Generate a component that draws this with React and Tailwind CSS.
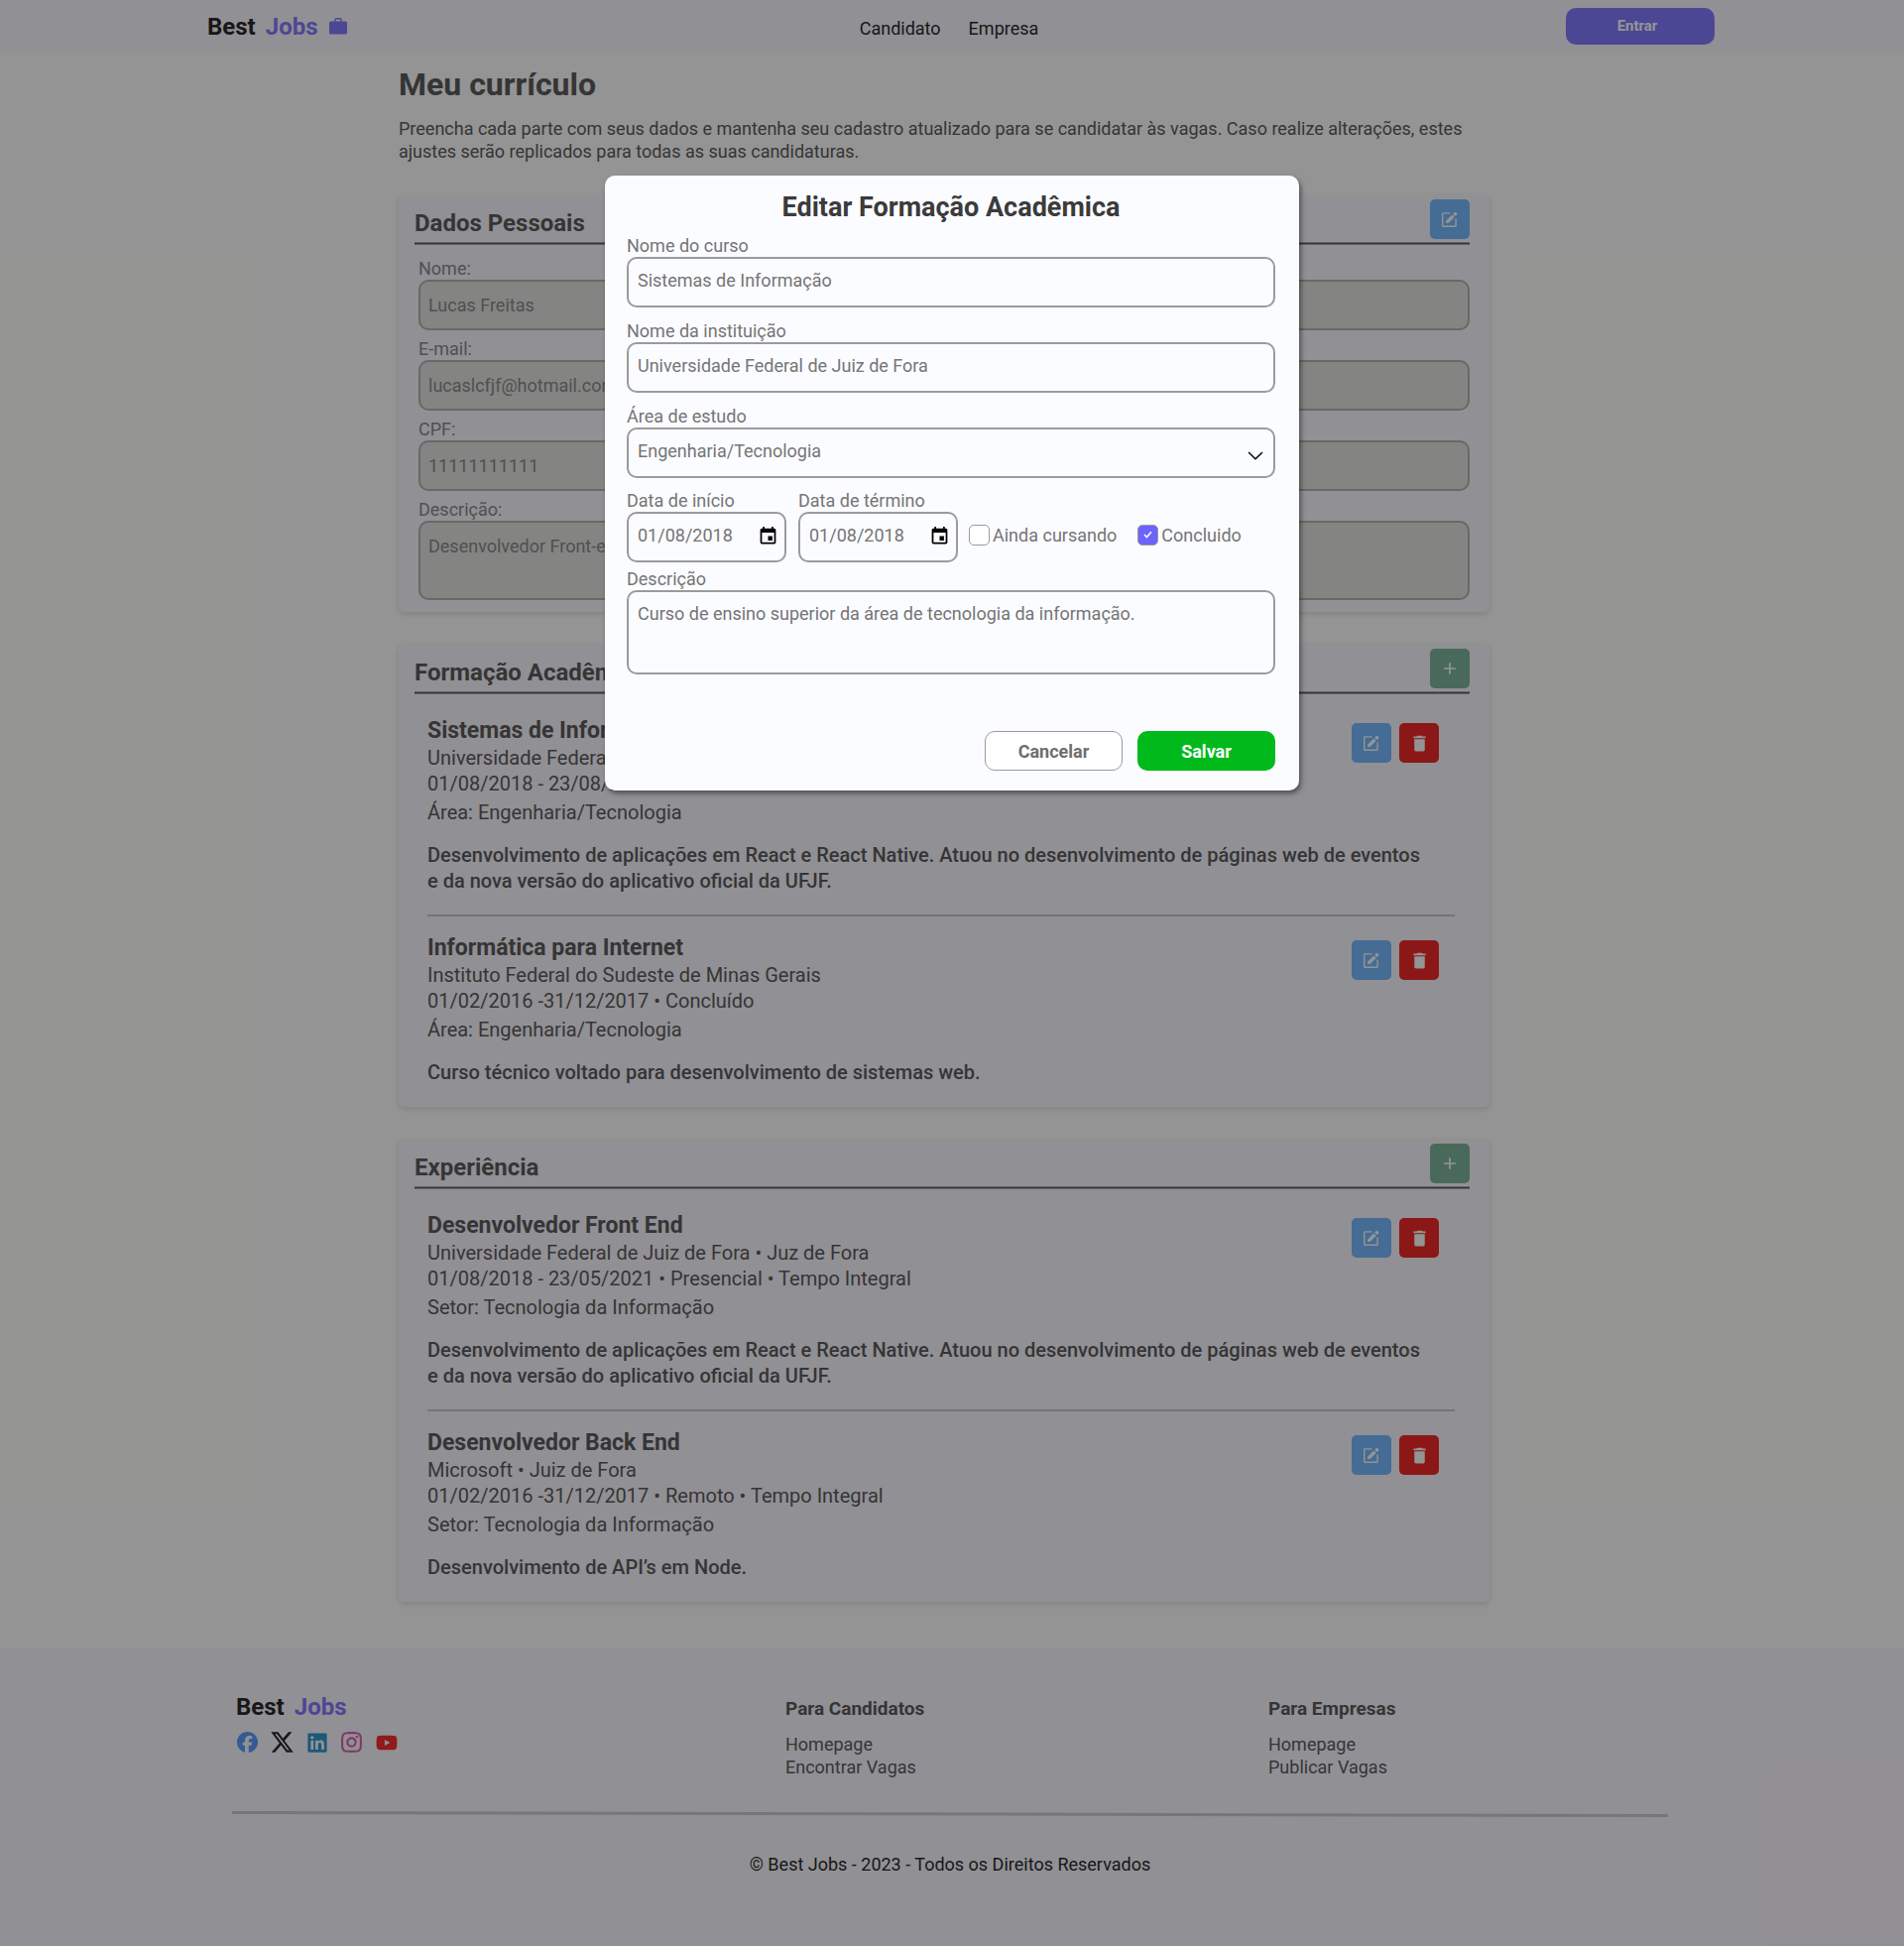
import { MdAdd, MdDelete, MdEvent } from "react-icons/md";
import { FaFacebook, FaLinkedin, FaXTwitter, FaYoutube } from "react-icons/fa6";
import { RiInstagramLine } from "react-icons/ri";

const REACT_TEXT =
  "Desenvolvimento de aplicações em React e React Native. Atuou no desenvolvimento de páginas web de eventos e da nova versão do aplicativo oficial da UFJF.";

const education = [
  {
    title: "Sistemas de Informação",
    lines: ["Universidade Federal de Juiz de Fora", "01/08/2018 - 23/08/2021 • Concluído"],
    area: "Área: Engenharia/Tecnologia",
    text: REACT_TEXT,
  },
  {
    title: "Informática para Internet",
    lines: ["Instituto Federal do Sudeste de Minas Gerais", "01/02/2016 -31/12/2017 • Concluído"],
    area: "Área: Engenharia/Tecnologia",
    text: "Curso técnico voltado para desenvolvimento de sistemas web.",
  },
];

const experience = [
  {
    title: "Desenvolvedor Front End",
    lines: [
      "Universidade Federal de Juiz de Fora • Juz de Fora",
      "01/08/2018 - 23/05/2021 • Presencial • Tempo Integral",
    ],
    area: "Setor: Tecnologia da Informação",
    text: REACT_TEXT,
  },
  {
    title: "Desenvolvedor Back End",
    lines: ["Microsoft • Juiz de Fora", "01/02/2016 -31/12/2017 • Remoto • Tempo Integral"],
    area: "Setor: Tecnologia da Informação",
    text: "Desenvolvimento de API’s em Node.",
  },
];

function BriefcaseIcon() {
  return (
    <svg width="18" height="17" viewBox="0 0 18 17" aria-hidden="true" className="text-[#6c63ff]">
      <path d="M6 4V1.6C6 1 6.4.7 7 .7h4c.6 0 1 .3 1 .9V4" fill="none" stroke="currentColor" strokeWidth="1.4" />
      <rect x="0" y="3.4" width="18" height="13.2" rx="1.6" fill="currentColor" />
    </svg>
  );
}

function EditIcon() {
  return (
    <svg width="16" height="16" viewBox="0 0 16 16" aria-hidden="true">
      <path d="M8.4 1.9H1.4a.7.7 0 0 0-.7.7v12a.7.7 0 0 0 .7.7h12a.7.7 0 0 0 .7-.7V7.4" fill="none" stroke="currentColor" strokeWidth="1.4" />
      <path d="M4.1 9.7l6.2-6.2 2.4 2.4-6.2 6.2H4.1z" fill="currentColor" />
      <path d="M11.1 2.7l1.8-1.8a.8.8 0 0 1 1.1 0l1.3 1.3a.8.8 0 0 1 0 1.1l-1.8 1.8z" fill="currentColor" />
    </svg>
  );
}

function Logo() {
  return (
    <span className="flex gap-[10px] text-[24px] leading-8 font-bold">
      <span className="text-black">Best</span>
      <span className="text-[#6c63ff]">Jobs</span>
    </span>
  );
}

function EditButton({ label }) {
  return (
    <button type="button" aria-label={label} className="flex size-10 items-center justify-center rounded-[5px] bg-[#5eadff] text-white">
      <EditIcon />
    </button>
  );
}

function Card({ title, action, children }) {
  return (
    <section className="rounded-[5px] bg-[#f9f6ff] shadow-[0_2px_6px_rgba(0,0,0,0.16)]">
      <div className="pt-1 pr-5 pl-4">
        <div className="flex items-end justify-between pb-[3px]">
          <h2 className="text-[24px] leading-8 font-bold">{title}</h2>
          {action}
        </div>
        <div className="h-[3px] border-y border-[#9c9c9c] bg-[#3d3d3d]" />
      </div>
      {children}
    </section>
  );
}

function Field({ id, label, value, area }) {
  const box = "block w-full rounded-[10px] border-2 border-[#a5a5a3] bg-[#dededc] px-2 text-lg text-[#757575]";
  return (
    <div className="flex flex-col">
      <label htmlFor={id} className="text-lg leading-[22px] text-[#757575]">{label}</label>
      {area ? (
        <textarea id={id} readOnly defaultValue={value} className={`${box} h-20 resize-none pt-[13px] leading-[22px]`} />
      ) : (
        <input id={id} type="text" readOnly defaultValue={value} className={`${box} h-[51px]`} />
      )}
    </div>
  );
}

function Entries({ items }) {
  return (
    <div className="pt-[22px] pr-[35px] pb-[22px] pl-[29px]">
      {items.map((item, i) => (
        <article key={item.title} className={i ? "mt-[21px] border-t-2 border-[#c1c1c1] pt-[17px]" : ""}>
          <div className="flex items-start justify-between">
            <div className="text-[20px] leading-[26px]">
              <h3 className="text-[23px] leading-[29px] font-bold">{item.title}</h3>
              {item.lines.map((line) => (
                <p key={line}>{line}</p>
              ))}
              <p className="mt-[3px]">{item.area}</p>
            </div>
            <div className="mt-[7px] mr-4 flex gap-2">
              <EditButton label={`Editar ${item.title}`} />
              <button type="button" aria-label={`Excluir ${item.title}`} className="flex size-10 items-center justify-center rounded-[5px] bg-[#ef0000] text-white">
                <MdDelete size={21} />
              </button>
            </div>
          </div>
          <p className="mt-[17px] max-w-[1010px] text-[20px] leading-[26px] font-medium">{item.text}</p>
        </article>
      ))}
    </div>
  );
}

function AddButton({ label }) {
  return (
    <button type="button" aria-label={label} className="flex size-10 items-center justify-center rounded-[5px] bg-[#66a989] text-white">
      <MdAdd size={20} />
    </button>
  );
}

function FooterColumn({ title, links }) {
  return (
    <nav aria-label={title} className="mt-[6px] text-lg leading-[23px]">
      <h2 className="text-[19px] leading-[23px] font-bold">{title}</h2>
      <ul className="mt-[13px]">
        {links.map((link) => (
          <li key={link}><a href="#">{link}</a></li>
        ))}
      </ul>
    </nav>
  );
}

const modalBox = "block w-full rounded-[10px] border-2 border-[#9b9b9a] bg-transparent px-[9px] text-lg text-[#757575]";

function ModalField({ id, label, children }) {
  return (
    <div>
      <label htmlFor={id} className="block text-lg leading-[22px]">{label}</label>
      {children}
    </div>
  );
}

function DateField({ id, label, value }) {
  return (
    <div className="w-[161px]">
      <ModalField id={id} label={label}>
        <div className="relative">
          <input id={id} type="text" defaultValue={value} className={`${modalBox} h-[51px] pb-1`} />
          <MdEvent size={21} className="pointer-events-none absolute top-[14px] right-2 text-black" />
        </div>
      </ModalField>
    </div>
  );
}

function Check({ label, checked }) {
  return (
    <label className="flex h-[51px] items-center gap-[3px] pb-1 text-lg leading-[22px]">
      <span className="relative flex">
        <input type="checkbox" defaultChecked={checked} className="size-[21px] appearance-none rounded-[5px] border border-[#9b9b9a] bg-white checked:bg-[#6c63ff]" />
        {checked && (
          <svg width="9" height="8" viewBox="0 0 9 8" aria-hidden="true" className="pointer-events-none absolute top-[6px] left-[6px]">
            <path d="M1 4l2.4 2.6L8 1.2" fill="none" stroke="white" strokeWidth="1.5" />
          </svg>
        )}
      </span>
      {label}
    </label>
  );
}

function EditModal() {
  return (
    <form
      role="dialog"
      aria-labelledby="modal-title"
      className="mx-auto mt-[177px] max-w-[700px] rounded-[10px] bg-[#fbfcff] pt-[15px] pr-6 pb-5 pl-[22px] text-[#757575] shadow-[2px_3px_5px_rgba(0,0,0,0.45)]"
    >
      <h2 id="modal-title" className="mb-[11px] text-center text-[27px] leading-[34px] font-bold text-[#3b3b3b]">
        Editar Formação Acadêmica
      </h2>
      <div className="flex flex-col gap-[13px]">
        <ModalField id="curso" label="Nome do curso">
          <input id="curso" type="text" defaultValue="Sistemas de Informação" className={`${modalBox} h-[51px] pb-1`} />
        </ModalField>
        <ModalField id="instituicao" label="Nome da instituição">
          <input id="instituicao" type="text" defaultValue="Universidade Federal de Juiz de Fora" className={`${modalBox} h-[51px] pb-1`} />
        </ModalField>
        <ModalField id="area" label="Área de estudo">
          <div className="relative">
            <select id="area" className={`${modalBox} h-[51px] appearance-none pb-1`}>
              <option>Engenharia/Tecnologia</option>
            </select>
            <svg width="16" height="9" viewBox="0 0 16 9" aria-hidden="true" className="pointer-events-none absolute top-6 right-3">
              <path d="M1 1l7 6.8L15 1" fill="none" stroke="black" strokeWidth="1.4" />
            </svg>
          </div>
        </ModalField>
      </div>
      <div className="mt-3 mb-[6px] flex items-end">
        <div className="mr-[11px] flex gap-3">
          <DateField id="inicio" label="Data de início" value="01/08/2018" />
          <DateField id="termino" label="Data de término" value="01/08/2018" />
        </div>
        <div className="flex gap-[21px]">
          <Check label="Ainda cursando" />
          <Check label="Concluido" checked />
        </div>
      </div>
      <ModalField id="descricao-curso" label="Descrição">
        <textarea
          id="descricao-curso"
          defaultValue="Curso de ensino superior da área de tecnologia da informação."
          className={`${modalBox} h-[85px] resize-none pt-[11px] leading-[22px]`}
        />
      </ModalField>
      <div className="mt-[57px] flex justify-end gap-[15px] text-lg leading-[23px] font-bold">
        <button type="button" className="h-10 w-[139px] rounded-[10px] border border-[#9b9b9a] bg-white text-[#6e6e6e]">Cancelar</button>
        <button type="submit" className="h-10 w-[139px] rounded-[10px] bg-[#00ba1b] text-white">Salvar</button>
      </div>
    </form>
  );
}

export default function App() {
  return (
    <div className="relative bg-[#fffffe] font-['Roboto','Noto_Sans',sans-serif] text-[#3d3d3d]">
      <header className="grid h-[53px] grid-cols-[1fr_auto_1fr] items-center bg-[#f9f6ff] pr-[191px] pl-[209px]">
        <a href="#" className="flex items-center gap-[11px]">
          <Logo />
          <BriefcaseIcon />
        </a>
        <nav className="mt-1 mr-6 flex gap-7 text-lg leading-[23px] text-black">
          <a href="#">Candidato</a>
          <a href="#">Empresa</a>
        </nav>
        <button type="button" className="h-[37px] w-[150px] justify-self-end rounded-[10px] bg-[#6c63ff] pr-[6px] text-[15px] font-bold text-white">
          Entrar
        </button>
      </header>

      <main className="pr-4 pb-[47px]">
        <div className="mx-auto max-w-[1100px] pt-[11px]">
          <h1 className="text-[32px] leading-[42px] font-bold">Meu currículo</h1>
          <p className="mt-3 text-lg leading-[23px]">
            Preencha cada parte com seus dados e mantenha seu cadastro atualizado para se candidatar às vagas. Caso realize alterações, estes ajustes serão replicados para todas as suas candidaturas.
          </p>
          <div className="mt-[33px] flex flex-col gap-[33px]">
            <Card title="Dados Pessoais" action={<EditButton label="Editar dados pessoais" />}>
              <div className="flex flex-col gap-2 px-5 pt-[13px] pb-3">
                <Field id="nome" label="Nome:" value="Lucas Freitas" />
                <Field id="email" label="E-mail:" value="lucaslcfjf@hotmail.com" />
                <Field id="cpf" label="CPF:" value="11111111111" />
                <Field id="descricao" label="Descrição:" value="Desenvolvedor Front-end" area />
              </div>
            </Card>
            <Card title="Formação Acadêmica" action={<AddButton label="Adicionar formação" />}>
              <Entries items={education} />
            </Card>
            <Card title="Experiência" action={<AddButton label="Adicionar experiência" />}>
              <Entries items={experience} />
            </Card>
          </div>
        </div>
      </main>

      <footer className="bg-[#f9f6ff] pt-[43px] pr-1 pb-[71px]">
        <div className="mx-auto max-w-[1448px]">
          <div className="grid grid-cols-[558fr_487fr_403fr]">
            <div className="pl-1">
              <Logo />
              <div className="-ml-px mt-[7px] flex gap-[10px]">
                <a href="#" aria-label="Facebook" className="flex size-[25px] items-center justify-center text-[#3b8bff]"><FaFacebook size={21} /></a>
                <a href="#" aria-label="X" className="flex size-[25px] items-center justify-center text-black"><FaXTwitter size={25} /></a>
                <a href="#" aria-label="LinkedIn" className="flex size-[25px] items-center justify-center text-[#0a88c8]"><FaLinkedin size={22} /></a>
                <a href="#" aria-label="Instagram" className="flex size-[25px] items-center justify-center text-[#d6459f]"><RiInstagramLine size={25} /></a>
                <a href="#" aria-label="YouTube" className="flex size-[25px] items-center justify-center text-[#f50a0a]"><FaYoutube size={22} /></a>
              </div>
            </div>
            <FooterColumn title="Para Candidatos" links={["Homepage", "Encontrar Vagas"]} />
            <FooterColumn title="Para Empresas" links={["Homepage", "Publicar Vagas"]} />
          </div>
          <svg viewBox="0 0 1448 6" preserveAspectRatio="none" aria-hidden="true" className="mt-[33px] h-[6px] w-full">
            <path d="M0 1.5L1448 4.5" stroke="#c4c4c2" strokeWidth="3" />
          </svg>
          <p className="mt-9 text-center text-lg leading-[23px] text-black">© Best Jobs - 2023 - Todos os Direitos Reservados</p>
        </div>
      </footer>

      <div className="absolute inset-0 bg-[#2d2d2d]/51">
        <EditModal />
      </div>
    </div>
  );
}
